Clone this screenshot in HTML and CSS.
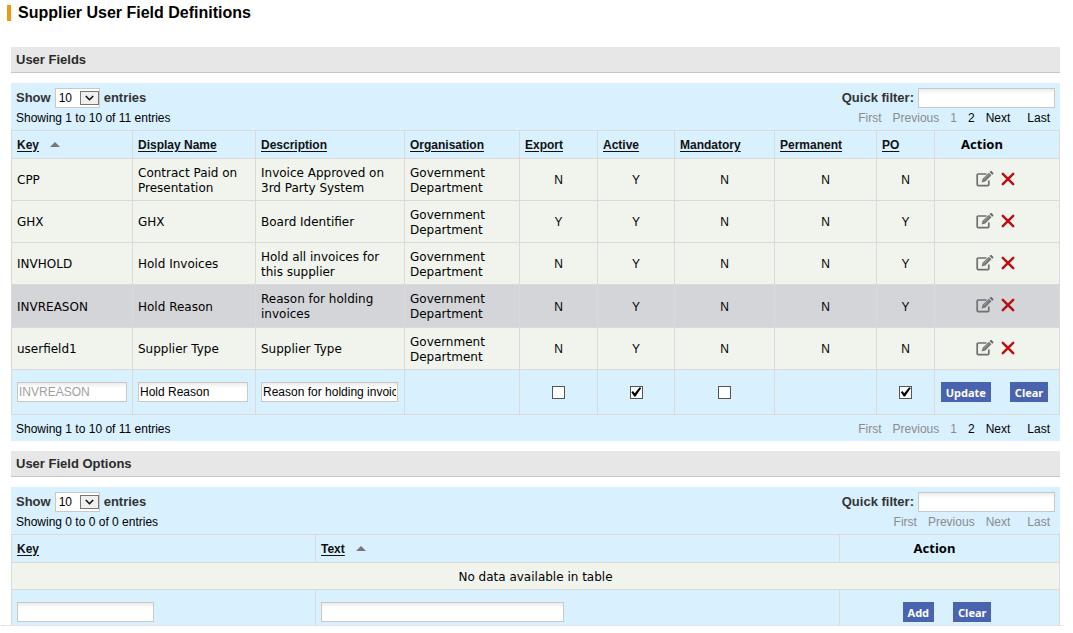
FILE: index.html
```html
<!DOCTYPE html>
<html lang="en">
<head>
<meta charset="utf-8">
<title>Supplier User Field Definitions</title>
<link rel="stylesheet" href="styles.css">
</head>
<body>
<svg class="sprites" aria-hidden="true">
  <symbol id="edit" viewBox="0 0 18 16">
    <path d="M10.5 3H2.2Q1.2 3 1.2 4v9.6q0 1 1 1h9.6q1 0 1-1V9.5" fill="none" stroke="#707070" stroke-width="1.7"/>
    <path d="M5.6 11.6l1-3.8 6.3-6.1 2.6 2.6-6.2 6.2z" fill="#777"/>
    <path d="M13.6 1l1-.9q.5-.3.9 0l1.8 1.8q.3.5 0 .9l-1 .9z" fill="#666"/>
    <path d="M7.6 8.6l5-4.9" stroke="#bbb" stroke-width=".6"/>
  </symbol>
  <symbol id="cross" viewBox="0 0 14 14">
    <path d="M1.8 1.8l10.4 10.4M12.2 1.8L1.8 12.2" fill="none" stroke="#b90f16" stroke-width="2.5" stroke-linecap="round"/>
  </symbol>
  <symbol id="drop" viewBox="0 0 19 14">
    <rect x=".5" y=".5" width="18" height="13" fill="#efefef" stroke="#777"/>
    <path d="M5.8 5l3.7 3.7L13.2 5" fill="none" stroke="#111" stroke-width="1.6"/>
  </symbol>
  <symbol id="sort" viewBox="0 0 10 5"><path d="M0 5L5 0l5 5z" fill="#777"/></symbol>
</svg>
<main class="page">
  <h1 class="title">Supplier User Field Definitions</h1>

  <section class="section">
    <h2 class="heading">User Fields</h2>
    <div class="panel">
      <div class="bar">
        <label class="length">Show <span class="pick"><select><option>10</option></select><svg class="drop"><use href="#drop"/></svg></span> entries</label>
        <label class="filter">Quick filter: <input class="field filter-box" type="text"></label>
      </div>
      <div class="status">
        <span>Showing 1 to 10 of 11 entries</span>
        <nav class="pager"><a class="off">First</a><a class="off">Previous</a><a class="off">1</a><a href="#p2">2</a><a href="#next">Next</a><a class="last" href="#last">Last</a></nav>
      </div>
      <table class="grid">
        <colgroup><col class="c-key"><col class="c-name"><col class="c-desc"><col class="c-org"><col class="c-exp"><col class="c-act"><col class="c-man"><col class="c-perm"><col class="c-po"><col class="c-action"></colgroup>
        <thead>
          <tr><th><a href="#key">Key</a><svg class="sort"><use href="#sort"/></svg></th><th><a href="#name">Display Name</a></th><th><a href="#desc">Description</a></th><th><a href="#org">Organisation</a></th><th><a href="#exp">Export</a></th><th><a href="#act">Active</a></th><th><a href="#man">Mandatory</a></th><th><a href="#perm">Permanent</a></th><th><a href="#po">PO</a></th><th class="action-head">Action</th></tr>
        </thead>
        <tbody>
          <tr><td>CPP</td><td>Contract Paid on Presentation</td><td>Invoice Approved on 3rd Party System</td><td>Government Department</td><td class="flag">N</td><td class="flag">Y</td><td class="flag">N</td><td class="flag">N</td><td class="flag">N</td><td><div class="tools"><button class="tool" aria-label="Edit"><svg class="edit"><use href="#edit"/></svg></button><button class="tool" aria-label="Delete"><svg class="cross"><use href="#cross"/></svg></button></div></td></tr>
          <tr><td>GHX</td><td>GHX</td><td>Board Identifier</td><td>Government Department</td><td class="flag">Y</td><td class="flag">Y</td><td class="flag">N</td><td class="flag">N</td><td class="flag">Y</td><td><div class="tools"><button class="tool" aria-label="Edit"><svg class="edit"><use href="#edit"/></svg></button><button class="tool" aria-label="Delete"><svg class="cross"><use href="#cross"/></svg></button></div></td></tr>
          <tr><td>INVHOLD</td><td>Hold Invoices</td><td>Hold all invoices for this supplier</td><td>Government Department</td><td class="flag">N</td><td class="flag">Y</td><td class="flag">N</td><td class="flag">N</td><td class="flag">Y</td><td><div class="tools"><button class="tool" aria-label="Edit"><svg class="edit"><use href="#edit"/></svg></button><button class="tool" aria-label="Delete"><svg class="cross"><use href="#cross"/></svg></button></div></td></tr>
          <tr class="selected"><td>INVREASON</td><td>Hold Reason</td><td>Reason for holding invoices</td><td>Government Department</td><td class="flag">N</td><td class="flag">Y</td><td class="flag">N</td><td class="flag">N</td><td class="flag">Y</td><td><div class="tools"><button class="tool" aria-label="Edit"><svg class="edit"><use href="#edit"/></svg></button><button class="tool" aria-label="Delete"><svg class="cross"><use href="#cross"/></svg></button></div></td></tr>
          <tr><td>userfield1</td><td>Supplier Type</td><td>Supplier Type</td><td>Government Department</td><td class="flag">N</td><td class="flag">Y</td><td class="flag">N</td><td class="flag">N</td><td class="flag">N</td><td><div class="tools"><button class="tool" aria-label="Edit"><svg class="edit"><use href="#edit"/></svg></button><button class="tool" aria-label="Delete"><svg class="cross"><use href="#cross"/></svg></button></div></td></tr>
        </tbody>
        <tfoot>
          <tr><td><input class="field short" type="text" value="INVREASON" aria-label="Key" disabled></td><td><input class="field short" type="text" value="Hold Reason" aria-label="Display Name"></td><td><input class="field wide" type="text" value="Reason for holding invoices" aria-label="Description"></td><td></td><td class="flag"><input class="tick" type="checkbox" aria-label="Export"></td><td class="flag"><input class="tick" type="checkbox" aria-label="Active" checked></td><td class="flag"><input class="tick" type="checkbox" aria-label="Mandatory"></td><td></td><td class="flag"><input class="tick" type="checkbox" aria-label="PO" checked></td><td><div class="buttons"><button class="btn">Update</button><button class="btn">Clear</button></div></td></tr>
        </tfoot>
      </table>
      <div class="status bottom">
        <span>Showing 1 to 10 of 11 entries</span>
        <nav class="pager"><a class="off">First</a><a class="off">Previous</a><a class="off">1</a><a href="#p2">2</a><a href="#next">Next</a><a class="last" href="#last">Last</a></nav>
      </div>
    </div>
  </section>

  <section class="section">
    <h2 class="heading">User Field Options</h2>
    <div class="panel">
      <div class="bar">
        <label class="length">Show <span class="pick"><select><option>10</option></select><svg class="drop"><use href="#drop"/></svg></span> entries</label>
        <label class="filter">Quick filter: <input class="field filter-box" type="text"></label>
      </div>
      <div class="status">
        <span>Showing 0 to 0 of 0 entries</span>
        <nav class="pager"><a class="off">First</a><a class="off">Previous</a><a class="off">Next</a><a class="off last">Last</a></nav>
      </div>
      <table class="grid">
        <colgroup><col class="o-key"><col class="o-text"><col class="o-action"></colgroup>
        <thead>
          <tr><th><a href="#okey">Key</a></th><th><a href="#otext">Text</a><svg class="sort"><use href="#sort"/></svg></th><th class="action-head">Action</th></tr>
        </thead>
        <tbody>
          <tr class="empty"><td colspan="3">No data available in table</td></tr>
        </tbody>
        <tfoot>
          <tr><td><input class="field option-key" type="text" aria-label="Key"></td><td><input class="field option-text" type="text" aria-label="Text"></td><td><div class="buttons"><button class="btn">Add</button><button class="btn">Clear</button></div></td></tr>
        </tfoot>
      </table>
    </div>
  </section>
</main>
</body>
</html>
```
FILE: styles.css
```css
* { box-sizing: border-box; }
body { margin: 0; background: #fff; color: #000; font-family: "Liberation Sans", Arial, sans-serif; font-size: 12px; line-height: 14px; }
.sprites { display: none; }
.page { height: calc(100vh - 7px); margin: 0 9px 0 1px; overflow: hidden; border-bottom: 1px solid #e3e3e3; padding: 5px 4px 0 6px; }
.title { margin: 0 0 26px; border-left: 4px solid #ee9711; padding-left: 7px; font-size: 16px; line-height: 16px; }
.section { margin: 0 0 10px 4px; }
.heading { margin: 0 0 10px; height: 26px; padding: 0 5px; border-bottom: 1px solid #c6c6c6; background: #e7e7e7; color: #2b2b2b; font-size: 13px; line-height: 25px; }
.panel { background: #d9f0ff; }
.bar { display: flex; justify-content: space-between; padding: 5px 5px 0; color: #333; font-size: 13px; font-weight: bold; }
.length, .filter { display: flex; align-items: center; gap: 4px; height: 20px; }
.pick { position: relative; display: flex; }
.pick select { appearance: none; width: 45px; height: 20px; border: 1px solid #c8c8c8; border-radius: 0; background: #fff; padding: 0 3px; color: #000; font: 12px "Liberation Sans", Arial, sans-serif; }
.drop { position: absolute; top: 3px; right: 1px; width: 19px; height: 14px; pointer-events: none; }
.field { display: block; width: 100%; height: 20px; border: 1px solid #c8c8c8; border-radius: 0; background: linear-gradient(#ececec, #fff 5px); padding: 0 1px; color: #000; font: 12px "Liberation Sans", Arial, sans-serif; }
.field:disabled { color: #a0a0a0; }
.filter-box { width: 137px; }
.status { display: flex; justify-content: space-between; align-items: center; height: 22px; padding: 0 10px 2px 5px; }
.bottom { height: 26px; padding-top: 4px; }
.pager { display: flex; gap: 11px; }
.pager a { color: #000; text-decoration: none; }
.pager .off { color: #8b8b8b; }
.pager .last { margin-left: 6px; }
.grid { width: 100%; table-layout: fixed; border-collapse: collapse; font-family: "DejaVu Sans", Verdana, sans-serif; }
.c-key { width: 121px; }
.c-name { width: 123px; }
.c-desc { width: 149px; }
.c-org { width: 115px; }
.c-exp { width: 78px; }
.c-act { width: 77px; }
.c-man { width: 100px; }
.c-perm { width: 102px; }
.c-po { width: 58px; }
.c-action { width: 125px; }
.o-key { width: 304px; }
.o-text { width: 524px; }
.o-action { width: 220px; }
.grid th, .grid td { height: 42px; border: 1px solid #dadada; padding: 0 5px; text-align: left; }
.grid th { height: 28px; font-family: "Liberation Sans", Arial, sans-serif; }
.grid th a { color: #111; text-decoration: underline; text-underline-offset: 2px; }
.grid .action-head { padding: 0 35px 2px 5px; text-align: center; font-family: "Noto Sans", Verdana, sans-serif; font-size: 13px; }
.grid tbody td { background: #f0f4ed; padding-top: 2px; line-height: 15px; }
.grid .selected td { height: 43px; background: #d4d5d9; }
.grid .flag { text-align: center; font-family: "Liberation Sans", Arial, sans-serif; }
.grid .empty td { height: 27px; text-align: center; }
.grid tfoot td { height: 45px; }
.sort { width: 10px; height: 5px; margin: 0 0 2px 11px; }
.tools { display: flex; justify-content: center; align-items: center; gap: 7px; padding: 0 4px 4px 0; }
.tool { display: flex; border: 0; background: none; padding: 0; }
.edit { width: 18px; height: 16px; }
.cross { width: 14px; height: 14px; }
.tick { appearance: none; display: block; width: 13px; height: 13px; margin: 0 auto; border: 1px solid #555; background: #fff; }
.tick:checked::before { content: ""; display: block; width: 11px; height: 11px; background: #000; clip-path: polygon(8% 52%, 22% 42%, 38% 62%, 84% 6%, 98% 14%, 46% 92%, 34% 92%); }
.buttons { display: flex; justify-content: center; gap: 19px; padding-right: 5px; }
.btn { height: 20px; border: 0; background: #4a63ae; padding: 0 5px; color: #fff; font: bold 11px "Noto Sans", Verdana, sans-serif; }
.short { max-width: 110px; }
.wide { max-width: 137px; }
.option-key { width: 137px; }
.option-text { width: 243px; }
```
